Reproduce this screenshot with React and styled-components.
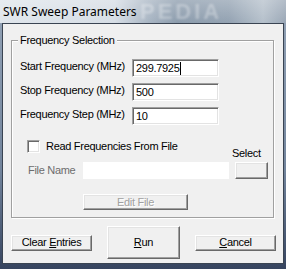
import React from "react";
import styled, { createGlobalStyle } from "styled-components";

const GlobalStyle = createGlobalStyle`
  html, body { margin: 0; padding: 0; background: #ffffff; }
  body { font-family: "Liberation Sans", Arial, sans-serif; }
  #root { width: 286px; height: 269px; }
`;

const Window = styled.div`
  position: relative;
  width: 286px;
  height: 269px;
  display: flex;
  flex-direction: column;
  overflow: hidden;
  background: #8a9ab0;
`;

const TitleBar = styled.div`
  flex: none;
  height: 23px;
  display: flex;
  align-items: center;
  padding-left: 3px;
  font-family: "Noto Sans", "Open Sans", sans-serif;
  font-size: 12px;
  color: #000;
  background:
    linear-gradient(180deg, rgba(255,255,255,0.25) 0%, rgba(255,255,255,0) 100%),
    linear-gradient(90deg, #dfe5eb 0%, #d6dde5 40%, #a8b5c3 52%, #8b9bac 62%, #93a2b2 80%, #b5c0cb 92%, #9aa7b6 100%);
`;

const Watermark = styled.div`
  position: absolute;
  left: 140px;
  top: 0;
  height: 23px;
  line-height: 23px;
  font-family: "Liberation Sans", Arial, sans-serif;
  font-weight: bold;
  font-size: 22px;
  letter-spacing: 3px;
  color: rgba(255, 255, 255, 0.3);
  filter: blur(1px);
  pointer-events: none;
`;

const FrameBody = styled.div`
  flex: 1;
  display: flex;
  padding: 0 2px 5px 2px;
  background: linear-gradient(180deg, #8f9fb3 0%, #72849c 60%, #36445f 100%);
`;

const Client = styled.div`
  flex: 1;
  display: flex;
  flex-direction: column;
  border: 1px solid #3a4452;
  background: #f0f0f0;
  padding: 16px 0 0 8px;
  font-size: 11px;
  letter-spacing: -0.3px;
  color: #000;
`;

const Group = styled.div`
  width: 263px;
  box-sizing: border-box;
  display: flex;
  flex-direction: column;
  align-items: flex-start;
  border: 1px solid #a0a0a0;
  box-shadow: 1px 1px 0 #ffffff, inset 1px 1px 0 #ffffff;
  padding: 0 0 7px 8px;
`;

const Legend = styled.div`
  margin: -7px 0 0 -2px;
  padding: 0 2px;
  line-height: 13px;
  background: #f0f0f0;
`;

const FreqGrid = styled.div`
  margin-top: 12px;
  display: grid;
  grid-template-columns: 112px 87px;
  grid-auto-rows: 18px;
  row-gap: 6px;
`;

const Label = styled.div`
  line-height: 13px;
  white-space: nowrap;
  color: ${(p) => (p.$disabled ? "#6d6d6d" : "#000")};
`;

const RowLabel = styled(Label)`
  align-self: start;
  margin-top: 1px;
`;

const Field = styled.div`
  box-sizing: border-box;
  height: 18px;
  background: #ffffff;
  border: 1px solid;
  border-color: #a0a0a0 #ffffff #ffffff #a0a0a0;
  box-shadow: inset 1px 1px 0 #696969, inset -1px -1px 0 #e3e3e3;
  padding: 1px 0 0 3px;
  line-height: 13px;
  display: flex;
  align-items: center;
  white-space: nowrap;
`;

const PlainField = styled.div`
  height: 17px;
  background: #ffffff;
`;

const Caret = styled.span`
  display: inline-block;
  width: 1px;
  height: 13px;
  margin-left: 1px;
  background: #000;
`;

const FileGrid = styled.div`
  margin: 15px 0 0 7px;
  display: grid;
  grid-template-columns: 50px 146px 33px;
  grid-template-rows: 20px 17px auto;
  column-gap: 6px;
  row-gap: 2px;
`;

const CheckRow = styled.label`
  grid-column: 1 / 3;
  align-self: start;
  display: flex;
  align-items: center;
  gap: 6px;
  line-height: 13px;
`;

const CheckBox = styled.span`
  box-sizing: border-box;
  width: 13px;
  height: 13px;
  background: #ffffff;
  border: 1px solid;
  border-color: #a0a0a0 #ffffff #ffffff #a0a0a0;
  box-shadow: inset 1px 1px 0 #696969, inset -1px -1px 0 #e3e3e3;
`;

const SelectLabel = styled(Label)`
  align-self: end;
  margin-left: -3px;
`;

const FileLabel = styled(Label)`
  align-self: center;
  padding-left: 1px;
`;

const Button = styled.button`
  box-sizing: border-box;
  width: ${(p) => p.$w}px;
  height: ${(p) => p.$h || 16}px;
  margin: 0;
  padding: 0;
  font-family: inherit;
  font-size: 11px;
  letter-spacing: -0.3px;
  line-height: 13px;
  color: ${(p) => (p.disabled ? "#a0a0a0" : "#000")};
  text-shadow: ${(p) => (p.disabled ? "1px 1px 0 #ffffff" : "none")};
  background: #f0f0f0;
  border: 1px solid;
  border-color: #ffffff #696969 #696969 #ffffff;
  box-shadow: inset -1px -1px 0 #a0a0a0, inset 1px 1px 0 #e3e3e3;
  border-radius: 0;
  cursor: default;
`;

const EditButton = styled(Button)`
  grid-column: 2;
  margin-top: 13px;
`;

const ButtonRow = styled.div`
  margin-top: 8px;
  display: flex;
  align-items: center;
  gap: 15px;
`;

const U = styled.span`
  text-decoration: underline;
  text-underline-offset: 1px;
`;

export default function App() {
  return (
    <>
      <GlobalStyle />
      <Window>
        <TitleBar>SWR Sweep Parameters</TitleBar>
        <Watermark>PEDIA</Watermark>
        <FrameBody>
          <Client>
            <Group>
              <Legend>Frequency Selection</Legend>
              <FreqGrid>
                <RowLabel>Start Frequency (MHz)</RowLabel>
                <Field>
                  299.7925
                  <Caret />
                </Field>
                <RowLabel>Stop Frequency (MHz)</RowLabel>
                <Field>500</Field>
                <RowLabel>Frequency Step (MHz)</RowLabel>
                <Field>10</Field>
              </FreqGrid>
              <FileGrid>
                <CheckRow>
                  <CheckBox />
                  Read Frequencies From File
                </CheckRow>
                <SelectLabel>Select</SelectLabel>
                <FileLabel $disabled>File Name</FileLabel>
                <PlainField />
                <Button $w={33} $h={17} />
                <EditButton $w={105} disabled>
                  Edit File
                </EditButton>
              </FileGrid>
            </Group>
            <ButtonRow>
              <Button $w={81}>
                Clear <U>E</U>ntries
              </Button>
              <Button $w={73} $h={33}>
                <U>R</U>un
              </Button>
              <Button $w={81}>
                <U>C</U>ancel
              </Button>
            </ButtonRow>
          </Client>
        </FrameBody>
      </Window>
    </>
  );
}
